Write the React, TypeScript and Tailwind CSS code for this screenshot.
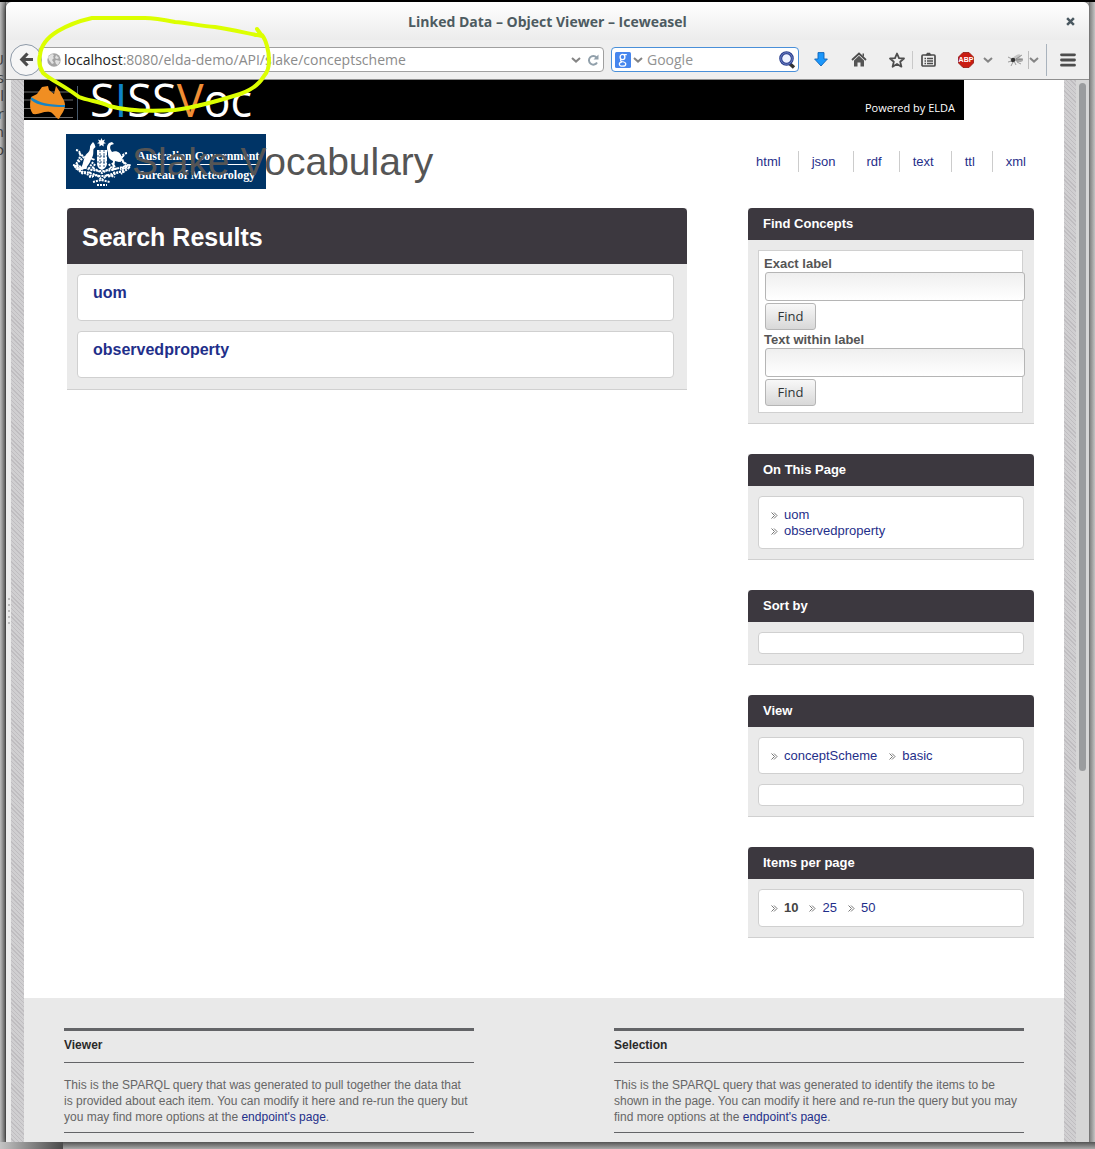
import React from "react";

const links = ["html", "json", "rdf", "text", "ttl", "xml"];

function Chevron() {
  return (
    <svg width="10" height="6" viewBox="0 0 10 6" className="shrink-0" aria-hidden="true">
      <path d="M1 1l4 3.600L9 1" fill="none" stroke="#858585" strokeWidth="2" />
    </svg>
  );
}

function Bullet() {
  return (
    <svg width="7" height="7" viewBox="0 0 7 7" className="shrink-0" aria-hidden="true">
      <path d="M0.5 0.5l3 3-3 3M3 0.5l3 3-3 3" fill="none" stroke="#666" strokeWidth="0.9" />
    </svg>
  );
}

function TitleBar() {
  return (
    <div className="flex h-[38px] items-center rounded-t-md bg-linear-to-b from-white to-[#ececec] pr-[9px] pl-[29px]">
      <h1 className="flex-1 text-center text-[14px] font-bold text-[#4d5b61]">
        Linked Data – Object Viewer – Iceweasel
      </h1>
      <button aria-label="Close window" className="flex h-5 w-5 items-center justify-center">
        <svg width="9" height="9" viewBox="0 0 8 8" aria-hidden="true">
          <path d="M1 1l6 6M7 1L1 7" stroke="#4a5860" strokeWidth="2.200" />
        </svg>
      </button>
    </div>
  );
}

function ToolBar() {
  return (
    <div className="flex h-10 items-center border-b border-[#8f8f8f] bg-[#efefef] pr-[13px] pl-1">
      <button
        aria-label="Back"
        className="z-10 -mr-1 flex h-8 w-8 shrink-0 items-center justify-center rounded-full border border-[#8e9aa8] bg-[#f6f6f6]"
      >
        <svg width="15" height="15" viewBox="0 0 15 15" aria-hidden="true">
          <path d="M8.500 1.500L2.800 7.500l5.700 6M3 7.500h11" fill="none" stroke="#4b4b4b" strokeWidth="3.200" />
        </svg>
      </button>
      <div className="flex h-[25px] flex-1 items-center rounded-sm border border-[#a0a0a0] bg-white pr-1 pl-2">
        <svg width="14" height="14" viewBox="0 0 14 14" className="shrink-0" aria-hidden="true">
          <circle cx="7" cy="7" r="6.700" fill="#a4a4a4" />
          <path d="M2 3l3-2 2 1-1 2 1 1-2 2 2 3-2 1-3-4-1-3zM9 2l3 3-2 1-2-1zM9 7l4 1-2 4-2-1-1-3z" fill="#e2e2e2" />
        </svg>
        <div className="ml-[3px] flex-1 text-[14px] whitespace-nowrap text-[#8b8b8b]">
          <span className="text-[#222]">localhost</span>:8080/elda-demo/API/slake/conceptscheme
        </div>
        <Chevron />
        <button aria-label="Reload" className="ml-1.5">
          <svg width="12" height="12" viewBox="0 0 12 12" aria-hidden="true">
            <path d="M9.500 3.500A4.300 4.300 0 1 0 10 8.500" fill="none" stroke="#91a0ab" strokeWidth="2" />
            <path d="M6.500 5.500h5V0.500z" fill="#91a0ab" />
          </svg>
        </button>
      </div>
      <form className="ml-[7px] flex h-[25px] w-[188px] shrink-0 items-center rounded-sm border border-[#4a90d9] bg-white pr-0.5 pl-[3px]">
        <svg width="16" height="16" viewBox="0 0 16 16" className="shrink-0" aria-hidden="true">
          <rect width="16" height="16" rx="1.500" fill="#4686ee" />
          <ellipse cx="7.500" cy="5" rx="2.400" ry="2.600" fill="none" stroke="#fff" strokeWidth="1.300" />
          <path d="M9 2.700h2.800M6.200 7.300c-1.200 1-.6 1.900.8 2.200 2.800.5 3.800 1 3.800 2.400s-1.400 2.300-3.300 2.300-3.200-.8-3.200-2.100c0-1.200 1.200-2 2.700-2.300" fill="none" stroke="#fff" strokeWidth="1.200" />
        </svg>
        <span className="ml-0.5">
          <Chevron />
        </span>
        <input
          aria-label="Search with Google"
          placeholder="Google"
          className="ml-1 min-w-0 flex-1 bg-transparent text-[14px] text-[#444] outline-none placeholder:text-[#929292]"
        />
        <button type="button" aria-label="Search">
          <svg width="18" height="18" viewBox="0 0 18 18" aria-hidden="true">
            <path d="M11.500 12.500l4.500 4" stroke="#333" strokeWidth="3.500" />
            <circle cx="8.500" cy="7.500" r="5.800" fill="#eef2ff" stroke="#2b3f8f" strokeWidth="3" />
            <circle cx="8.500" cy="7.500" r="5.800" fill="none" stroke="#7f92cf" strokeWidth="0.800" />
          </svg>
        </button>
      </form>
      <div className="ml-[15px] flex h-full shrink-0 items-center">
        <button aria-label="Downloads">
          <svg width="14" height="15" viewBox="0 0 14 15" aria-hidden="true">
            <path d="M4 .6h6v6.400h3.400L7 14 .6 7H4z" fill="#1b97fb" stroke="#0f63b8" strokeWidth="0.900" />
          </svg>
        </button>
        <button aria-label="Home" className="ml-[23px]">
          <svg width="16" height="15" viewBox="0 0 16 15" aria-hidden="true">
            <path d="M1 8l7-6.500L15 8" fill="none" stroke="#4d4d4d" strokeWidth="1.800" />
            <path d="M11.500 1.500H13V5l-1.500-1.500zM3 8.500l5-4.700 5 4.700V14.500H9.500v-4h-3v4H3z" fill="#555" />
          </svg>
        </button>
        <button aria-label="Bookmark this page" className="ml-[22px]">
          <svg width="16" height="16" viewBox="0 0 16 16" aria-hidden="true">
            <path d="M8 1.500l2 4.600 5 .4-3.800 3.300 1.200 4.900L8 12l-4.400 2.700 1.200-4.900L1 6.500l5-.4z" fill="none" stroke="#4d4d4d" strokeWidth="1.800" strokeLinejoin="round" />
          </svg>
        </button>
        <span className="ml-[7px] h-[18px] w-px bg-[#c9c9c9]" />
        <button aria-label="Show bookmarks" className="ml-2">
          <svg width="15" height="15" viewBox="0 0 15 15" aria-hidden="true">
            <rect x="1" y="3" width="13" height="11" rx="1" fill="none" stroke="#4d4d4d" strokeWidth="1.700" />
            <path d="M4.500 3.500L6 .8h3l1.500 2.700z" fill="#4d4d4d" />
            <path d="M3.500 6.500h1.500M6 6.500h6M3.500 9h1.500M6 9h6M3.500 11.500h1.500M6 11.500h6" stroke="#4d4d4d" strokeWidth="1.300" />
          </svg>
        </button>
        <button
          aria-label="Adblock"
          className="relative ml-[22px] flex h-4 w-4 items-center justify-center font-['Liberation_Sans',sans-serif] text-[7px] font-bold text-white"
        >
          <svg width="16" height="16" viewBox="0 0 16 16" className="absolute inset-0" aria-hidden="true">
            <path d="M5 .5h6L15.500 5v6L11 15.500H5L.5 11V5z" fill="#c91c12" stroke="#8d1710" strokeWidth="0.800" />
          </svg>
          <span className="relative leading-4">ABP</span>
        </button>
        <span className="ml-[9px]">
          <Chevron />
        </span>
        <svg width="16" height="14" viewBox="0 0 16 14" className="ml-[15px]" aria-hidden="true">
          <ellipse cx="9" cy="4" rx="4" ry="2" fill="#c4c4c4" transform="rotate(-25 9 4)" />
          <ellipse cx="11" cy="7" rx="4" ry="2" fill="#aaa" />
          <circle cx="5" cy="7" r="2.300" fill="#333" />
          <path d="M0 4l4 2M0 9l4-1M3 13l2-4M8 12L6 8M8 6l6-4M8 7l7-1M9 9l4 2" stroke="#777" strokeWidth="0.700" />
        </svg>
        <span className="ml-1 h-[18px] w-px bg-[#bdbdbd]" />
        <Chevron />
        <span className="ml-[7px] h-8 w-px bg-[#a9b3bd]" />
        <button aria-label="Menu" className="ml-[13px]">
          <svg width="16" height="14" viewBox="0 0 16 14" aria-hidden="true">
            <path d="M1.500 1.800h13M1.500 7h13M1.500 12.200h13" stroke="#4d4d4d" strokeWidth="2.800" strokeLinecap="round" />
          </svg>
        </button>
      </div>
    </div>
  );
}

function Banner() {
  return (
    <div className="flex h-10 max-w-[940px] items-end justify-between overflow-hidden bg-black pr-[9px] text-white">
      <div className="flex h-10 items-center">
        <svg width="55" height="40" viewBox="0 0 55 40" aria-hidden="true">
          <path d="M0 12h49M0 20h49M0 28.500h49M0 37.500h49" stroke="#777" strokeWidth="0.900" />
          <path d="M7 17l6-3 5-7 6-1 1 4 5 4 2-8 4 6c1 5 5 8 5 13 0 6-4 9-6 14-4-1-5-6-9-7-7-1-11 3-17 2-4-5-3-11-2-17z" fill="#f08e22" />
          <path d="M7 17c9 6 17 8 34 8v2c-15 0-27-1-34-7z" fill="#1684c4" />
          <path d="M53.500 6v34" stroke="#46586a" strokeWidth="1" />
        </svg>
        <div className="ml-[11px] text-[45px] leading-10">
          S<span className="text-[#0e83c8]">I</span>SS<span className="text-[#f08e35]">V</span>oc
        </div>
      </div>
      <div className="pb-1 text-[11px] leading-4">Powered by ELDA</div>
    </div>
  );
}

function Crest() {
  return (
    <svg width="62" height="48" viewBox="0 0 62 48" className="shrink-0" aria-hidden="true">
      <g fill="#fff">
        <path d="M30.500 0l1 2.400 2.500-.8-1.200 2.300 2.200 1.300-2.500.6.200 2.600-2.200-1.500-2.100 1.500.1-2.600-2.500-.6 2.200-1.300L27 1.600l2.500.8z" />
        <path d="M22 4l1.500 2 1 3-2 2c-.5 3 .5 5-1.500 9l3 1-1 1.500-3-1c-1 4-4 6-5 9l-6 2-5-1 6-2c3-4 2-10 6-14 3-2 3-5 3-7l1-2z" />
        <path d="M38 5l3-1 2 2-3 1c-2 3 0 5 1 7 5-2 9 1 10 6 0 3-1 4-3 4l-4-1-1 7 2 2h-4l1-9c-4-2-5-4-5-8-1-4-2-7 1-10z" />
        <path d="M26 12h10v13c0 4-3 6-5 7-3-1-5-3-5-7z" />
      </g>
      <path d="M26 18h10M26 24h10M29 12v18M33 12v18" stroke="#003466" strokeWidth="0.800" strokeDasharray="2 1" />
      <g fill="none" stroke="#fff" strokeWidth="2" strokeDasharray="2 1">
        <path d="M5 12c5 1 5 5 3 9s-5 7-1 10 9 5 15 8M8 15l5 4-8 7 7 5-9-3 9 8" />
        <path d="M56 15c-5 1-6 4-4 8s5 6 0 9-9 4-15 7M53 17l-4 5 8 5-8 4 10-2-9 7" />
        <path d="M2 27c12 2 19 6 29 6s18-4 29-6M10 34c8-1 13 4 21 4s14-5 21-4M18 39l8-2 5 5 5-5 8 2M22 44l8-2 9 2M26 47h10" />
        <path d="M22 24l-5 8M41 25l5 7M22 30l9 5 9-5M24 26l-6 10M38 26l6 10" />
      </g>
    </svg>
  );
}

function PageHeader() {
  return (
    <header className="flex items-start justify-between pt-[14px] pr-[26px] pl-[42px]">
      <div className="relative">
        <div className="flex h-[55px] w-[200px] items-center bg-[#003466] pl-[5px] text-white">
          <Crest />
          <div className="ml-1 pt-2 font-['Liberation_Serif',serif] text-[12px] font-bold whitespace-nowrap">
            <div className="border-b border-white leading-4">Australian Government</div>
            <div className="pt-0.5 leading-4">Bureau of Meteorology</div>
          </div>
        </div>
        <h2 className="absolute top-0 left-[66px] text-[39px] leading-[55px] whitespace-nowrap text-[#555]">
          Slake Vocabulary
        </h2>
      </div>
      <nav aria-label="Formats" className="mt-[17px] flex text-[13px] leading-[21px] text-[#1f2f8a]">
        {links.map((l, i) => (
          <a
            key={l}
            href={"#" + l}
            className={i < links.length - 1 ? "mr-[13px] border-r border-[#ccc] pr-[17px]" : "mr-3"}
          >
            {l}
          </a>
        ))}
      </nav>
    </header>
  );
}

function Panel({ title, children }: { title: string; children: React.ReactNode }) {
  return (
    <section className="border-b border-[#d0d0d0] bg-[#eaeaea]">
      <div className="rounded-t-[4px] bg-[#3c383f] px-[15px] text-[13px] leading-8 font-bold text-white">{title}</div>
      <div className="flex flex-col gap-2.5 p-2.5">{children}</div>
    </section>
  );
}

function Box({ children }: { children?: React.ReactNode }) {
  return (
    <div className="min-h-[22px] rounded-[4px] border border-[#d0d0d0] bg-white px-3 text-[13px] leading-4 text-[#1f2f8a]">
      {children}
    </div>
  );
}

function Item({ label, bold }: { label: string; bold?: boolean }) {
  return (
    <li className="flex items-center gap-1.5">
      <Bullet />
      {bold ? <strong className="text-[#444]">{label}</strong> : <a href={"#" + label}>{label}</a>}
    </li>
  );
}

function Finder({ id, label }: { id: string; label: string }) {
  return (
    <form className="mb-0.5">
      <label htmlFor={id} className="block text-[13px] leading-4 font-bold text-[#555]">
        {label}
      </label>
      <input
        id={id}
        className="-mr-[3px] ml-px block h-[29px] w-[260px] rounded-[3px] border border-[#b5b5b5] bg-linear-to-b from-[#efefef] to-white px-2 text-[13px]"
      />
      <button
        type="button"
        className="mt-0.5 ml-px block h-[27px] w-[51px] rounded-[3px] border border-[#b5b5b5] bg-linear-to-b from-[#f8f8f8] to-[#d8d8d8] font-['Open_Sans',sans-serif] text-[13px] font-medium text-[#2e3436]"
      >
        Find
      </button>
    </form>
  );
}

function FooterColumn({ title, first }: { title: string; first: string }) {
  return (
    <section className="border-t-[3px] border-[#636467]">
      <h3 className="border-b border-[#636467] pt-[6px] pb-[9px] text-[12px] leading-4 font-bold text-[#2a2a2a]">{title}</h3>
      <p className="border-b border-[#636467] pt-[14px] pr-1 pb-[7px] text-[12px] leading-4 text-[#666]">
        {first}{" "}
        <a href="#endpoint" className="text-[#1f2f8a]">
          endpoint's page
        </a>
        .
      </p>
    </section>
  );
}

export default function App() {
  return (
    <div className="relative flex min-h-screen flex-col border-t-2 border-black bg-linear-to-b from-[#b8b8b8] to-[#a2a2a2] font-['Open_Sans',sans-serif]">
      <div className="flex flex-1">
        <div
          aria-hidden="true"
          className="flex w-1.5 flex-col items-end overflow-hidden border-r border-[#777] bg-linear-to-r from-[#bfbfbf] to-[#8c8c8c] pt-12 pr-px text-[15px] leading-[18px] text-[#444]"
        >
          {["U", "s", "il", "r", "n", "o"].map((c) => (
            <span key={c}>{c}</span>
          ))}
        </div>
        <div className="flex min-w-0 flex-1 flex-col rounded-t-md bg-[#ececec] shadow-[0_1px_6px_rgba(0,0,0,0.9)]">
          <TitleBar />
          <ToolBar />
          <div className="flex flex-1">
            <div className="flex w-[5px] flex-col items-center justify-center gap-1 bg-[#ececec]">
              {[0, 1, 2, 3, 4].map((i) => (
                <span key={i} className="h-0.5 w-0.5 bg-[#bbb]" />
              ))}
            </div>
            <div className="w-[13px] bg-[repeating-linear-gradient(45deg,#d0cfd1_0px,#d0cfd1_2px,#bfbdc0_2px,#bfbdc0_3px)]" />
            <div className="min-w-0 flex-1 bg-white font-['Liberation_Sans',sans-serif]">
              <div className="font-['Open_Sans',sans-serif]">
                <Banner />
              </div>
              <PageHeader />
              <main className="flex items-start gap-[61px] pt-[19px] pr-[30px] pb-[60px] pl-[43px]">
                <section className="flex-1 border-b border-[#d0d0d0] bg-[#eaeaea]">
                  <h2 className="rounded-t-[4px] bg-[#3c383f] px-[15px] pt-0.5 text-[25px] leading-[54px] font-bold text-white">
                    Search Results
                  </h2>
                  <div className="flex flex-col gap-2.5 pt-2.5 pr-[13px] pb-[11px] pl-2.5">
                    {["uom", "observedproperty"].map((t) => (
                      <article key={t} className="rounded-[4px] border border-[#d0d0d0] bg-white px-[15px] pt-2 pb-[17px]">
                        <a href={"#" + t} className="block text-[16px] leading-5 font-bold text-[#1f2f8a]">
                          {t}
                        </a>
                      </article>
                    ))}
                  </div>
                </section>
                <aside className="flex w-[286px] shrink-0 flex-col gap-[30px]">
                  <Panel title="Find Concepts">
                    <div className="mr-px border border-[#d0d0d0] bg-white px-[5px] pt-[5px] pb-1">
                      <Finder id="exact" label="Exact label" />
                      <Finder id="within" label="Text within label" />
                    </div>
                  </Panel>
                  <Panel title="On This Page">
                    <Box>
                      <ul className="pt-2.5 pb-[9px]">
                        <Item label="uom" />
                        <Item label="observedproperty" />
                      </ul>
                    </Box>
                  </Panel>
                  <Panel title="Sort by">
                    <Box />
                  </Panel>
                  <Panel title="View">
                    <Box>
                      <ul className="flex gap-3 pt-2.5 pb-[9px]">
                        <Item label="conceptScheme" />
                        <Item label="basic" />
                      </ul>
                    </Box>
                    <Box />
                  </Panel>
                  <Panel title="Items per page">
                    <Box>
                      <ul className="flex gap-[11px] py-2.5">
                        <Item label="10" bold />
                        <Item label="25" />
                        <Item label="50" />
                      </ul>
                    </Box>
                  </Panel>
                </aside>
              </main>
              <footer className="grid grid-cols-2 gap-[140px] bg-[#e9e9e9] px-10 pt-[30px] pb-[9px]">
                <FooterColumn
                  title="Viewer"
                  first="This is the SPARQL query that was generated to pull together the data that is provided about each item. You can modify it here and re-run the query but you may find more options at the"
                />
                <FooterColumn
                  title="Selection"
                  first="This is the SPARQL query that was generated to identify the items to be shown in the page. You can modify it here and re-run the query but you may find more options at the"
                />
              </footer>
            </div>
            <div className="w-3 bg-[repeating-linear-gradient(45deg,#d0cfd1_0px,#d0cfd1_2px,#bfbdc0_2px,#bfbdc0_3px)]" />
            <div className="w-[13px] bg-[#d6d6d6] pt-[3px] pl-[3px]">
              <div className="h-[688px] w-[7px] rounded-full bg-[#9a9c9e]" />
            </div>
          </div>
        </div>
        <div className="w-1.5 border-l border-[#777] bg-linear-to-r from-[#858585] to-[#c4c4c4]" />
      </div>
      <div className="flex h-[7px] bg-linear-to-b from-[#555] to-[#aaa]">
        <div className="w-[63px] bg-linear-to-r from-[#c4c4c4] to-[#4a4a4a]" />
      </div>
      <svg width="280" height="120" viewBox="0 2 280 120" className="pointer-events-none absolute top-0 left-0 z-20" aria-hidden="true">
        <path
          d="M257 29l5 7c-12-2-28-6-47-9-14-1-27-4-40-5-10-2-20-4-30-4H92c-13 3-24 7-34 13-10 6-17 14-18 24-2 8 0 13 3 18 9 8 19 11 36 24 10 4 20 4 30 9 15 4 36 6 66 4 15-2 43-9 65-16 12-4 20-11 24-18 4-4 5-11 5-16 0-9-3-20-7-25h-7"
          fill="none"
          stroke="#dcff00"
          strokeWidth="4"
          strokeLinecap="round"
          strokeLinejoin="round"
        />
      </svg>
    </div>
  );
}
